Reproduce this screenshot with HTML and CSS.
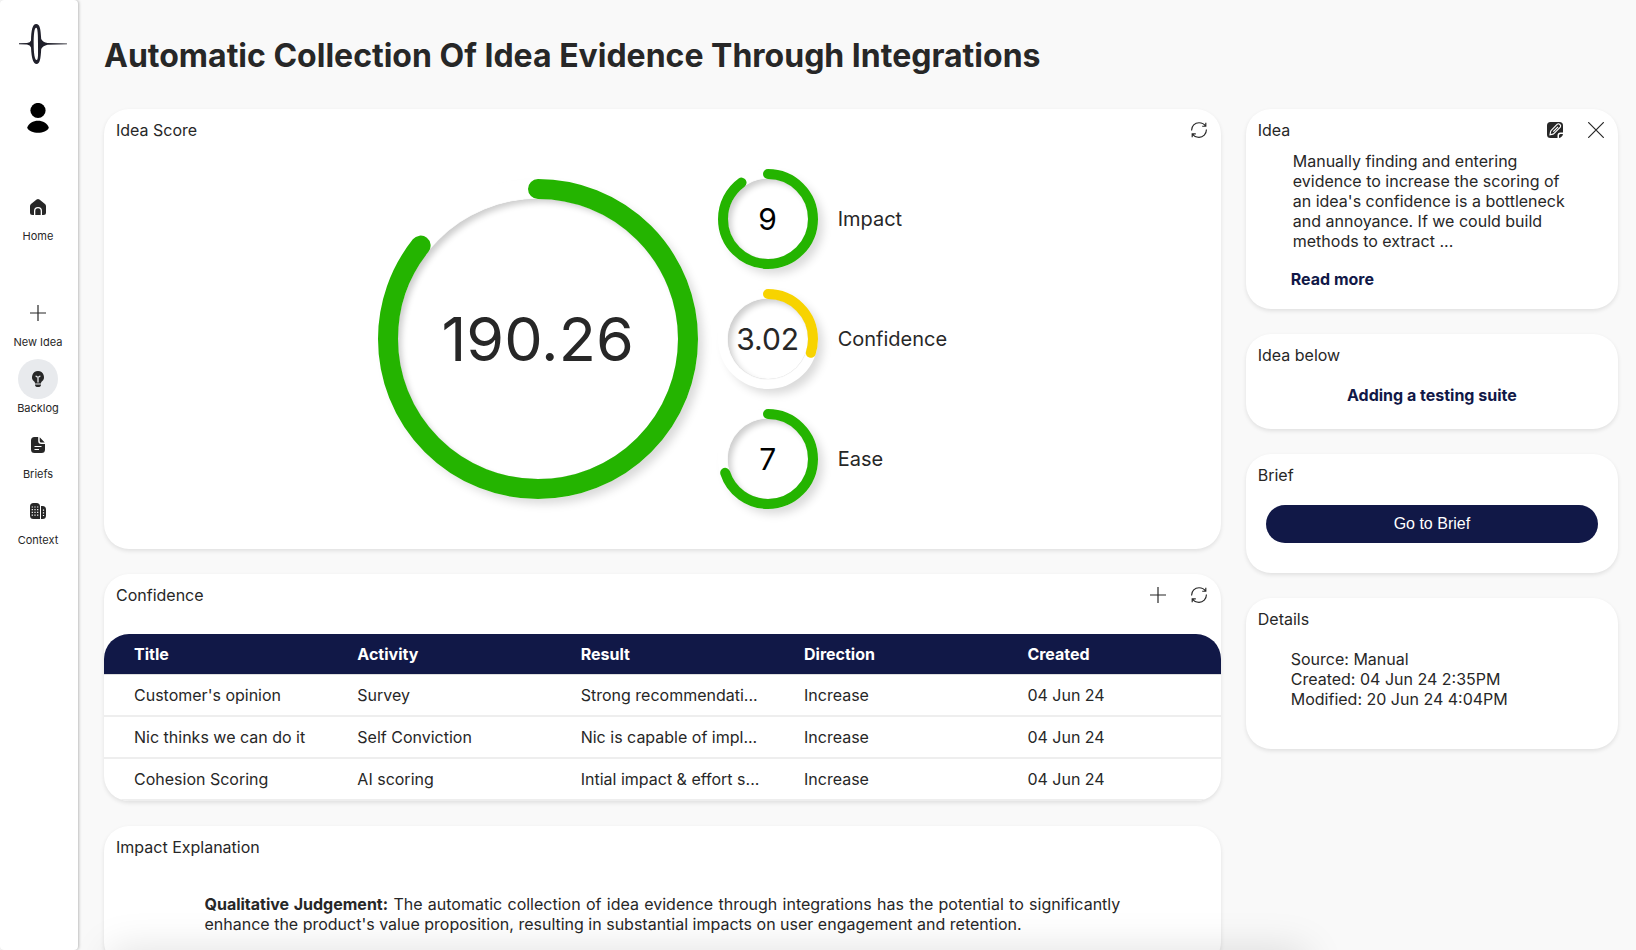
FILE: index.html
```html
<!DOCTYPE html>
<html lang="en">
<head>
<meta charset="utf-8">
<title>Automatic Collection Of Idea Evidence Through Integrations</title>
<link rel="stylesheet" href="styles.css">
</head>
<body>
<svg class="defs" aria-hidden="true">
  <symbol id="refresh" viewBox="0 0 16 16">
    <path d="M.6 8.600C.4 4 4 .7 8 .7C11 .7 13.300 2 14.500 4M15.400 7.400C15.600 12 12 15.300 8 15.300C5 15.300 2.700 14 1.500 12M14.800.8V4.200H11.200M1.200 15.200V11.800H4.800" fill="none" stroke="currentColor" stroke-width="1.150"/>
  </symbol>
  <symbol id="plus" viewBox="0 0 16 16">
    <path d="M8 0V16M0 8H16" stroke="currentColor" stroke-width="1.200"/>
  </symbol>
</svg>
<div class="app">
  <nav class="sidebar">
    <a class="logo" href="#" aria-label="Logo">
      <svg width="50" height="42" viewBox="0 0 50 42">
        <path fill="#20202b" fill-rule="evenodd" d="M1 20.300 9 20.100Q12.200 19.500 13 17.500C13.200 7 14.500 1 18.200 1S22.700 6 23.200 16Q25 19.400 29.500 20L49 20.400V21.300L29.500 21.800Q25 22.800 23.200 26C22.700 36 21.800 41 18.600 41S13.500 36 13 24.500Q12.200 22 9 21.400L1 21.200ZM18 4.800C16.200 5.500 15.700 12 15.700 21S16.700 37 18.600 37S20 30 20 21S19.800 4 18 4.800Z"/>
      </svg>
    </a>
    <a class="profile" href="#" aria-label="Profile">
      <svg width="22" height="30" viewBox="0 0 22 30"><circle cx="11" cy="7.500" r="7.600"/><path d="M.2 24.800C3 15.500 19 15.500 21.800 24.800C19 31.500 3 31.500 .2 24.800Z"/></svg>
    </a>
    <a class="item home" href="#">
      <span class="bubble"><svg width="16" height="16" viewBox="0 0 16 16"><path fill="currentColor" d="M8 0Q8.700 0 9.400.600L15 5Q16 5.900 16 7.200V13.500Q16 16 13.500 16H12V12A4 4 0 0 0 4 12V16H2.500Q0 16 0 13.500V7.200Q0 5.900 1 5L6.600.600Q7.300 0 8 0ZM8 9.300A2.700 2.700 0 0 1 10.700 12V16H5.300V12A2.700 2.700 0 0 1 8 9.300Z"/></svg></span>
      <span>Home</span>
    </a>
    <a class="item" href="#">
      <span class="bubble"><svg width="16" height="16"><use href="#plus"/></svg></span>
      <span>New Idea</span>
    </a>
    <a class="item active" href="#">
      <span class="bubble"><svg width="16" height="16" viewBox="0 0 16 16"><path fill="currentColor" d="M8 0A6 6 0 0 1 11.800 10.600Q11 11.300 11 12.400H5Q5 11.300 4.200 10.600A6 6 0 0 1 8 0ZM5 13.400H11Q11 16 8 16T5 13.400Z"/><path d="M5.700 4.800Q6.500 6.200 8 6.200T10.300 4.800M8 6.200V11.500" fill="none" stroke="#e8eaed" stroke-width="1.300"/></svg></span>
      <span>Backlog</span>
    </a>
    <a class="item" href="#">
      <span class="bubble"><svg width="16" height="16" viewBox="0 0 16 16"><path fill="currentColor" d="M4.500 0H8.200V4Q8.200 7 11.200 7H15V12.500Q15 16 11.500 16H4.500Q1 16 1 12.500V3.500Q1 0 4.500 0ZM9.700.200 14.700 5.600H11.200Q9.700 5.600 9.700 4Z"/><path d="M4.500 9.500H11.500M4.500 12.500H9" stroke="#fff" stroke-width="1.100"/></svg></span>
      <span>Briefs</span>
    </a>
    <a class="item" href="#">
      <span class="bubble"><svg width="16" height="16" viewBox="0 0 16 16"><path fill="currentColor" d="M3.500 0H6.500Q10 0 10 3.500V16H3.500Q0 16 0 12.500V3.500Q0 0 3.500 0ZM11 3H12.500Q16 3 16 6.500V12.500Q16 16 12.500 16H11Z"/><path d="M1.700 4H8.300M1.700 6.700H8.300M1.700 9.400H8.300M1.700 12.100H8.300" stroke="#fff" stroke-width="1.200" stroke-dasharray="1.200 1.500"/><path d="M13.500 6.500V13" stroke="#fff" stroke-width="1.200" stroke-dasharray="1.200 1.500"/></svg></span>
      <span>Context</span>
    </a>
  </nav>
  <main class="main">
    <h1>Automatic Collection Of Idea Evidence Through Integrations</h1>
    <div class="columns">
      <div class="column">
        <section class="card score">
          <header><h2>Idea Score</h2><button aria-label="Refresh score"><svg width="16" height="16"><use href="#refresh"/></svg></button></header>
          <div class="rings">
            <div class="ring large"><div class="dial">
              <svg viewBox="0 0 320 320"><circle class="green" cx="160" cy="160" r="150" pathLength="1000" stroke-width="20" stroke-dasharray="857 1000"/></svg>
              <span>190.26</span>
            </div></div>
            <ul class="parts">
              <li><div class="ring"><div class="dial"><svg viewBox="0 0 100 100"><circle class="green" cx="50" cy="50" r="45" pathLength="100" stroke-width="10" stroke-dasharray="90 100"/></svg><span class="black">9</span></div></div>Impact</li>
              <li><div class="ring"><div class="dial"><svg viewBox="0 0 100 100"><circle class="yellow" cx="50" cy="50" r="45" pathLength="100" stroke-width="10" stroke-dasharray="30 100"/></svg><span>3.02</span></div></div>Confidence</li>
              <li><div class="ring"><div class="dial"><svg viewBox="0 0 100 100"><circle class="green" cx="50" cy="50" r="45" pathLength="100" stroke-width="10" stroke-dasharray="70 100"/></svg><span class="black">7</span></div></div>Ease</li>
            </ul>
          </div>
        </section>
        <section class="card evidence">
          <header><h2>Confidence</h2><button aria-label="Add evidence"><svg width="16" height="16"><use href="#plus"/></svg></button><button aria-label="Refresh confidence"><svg width="16" height="16"><use href="#refresh"/></svg></button></header>
          <table>
            <thead><tr><th>Title</th><th>Activity</th><th>Result</th><th>Direction</th><th>Created</th></tr></thead>
            <tbody>
              <tr><td>Customer's opinion</td><td>Survey</td><td>Strong recommendati...</td><td>Increase</td><td>04 Jun 24</td></tr>
              <tr><td>Nic thinks we can do it</td><td>Self Conviction</td><td>Nic is capable of impl...</td><td>Increase</td><td>04 Jun 24</td></tr>
              <tr><td>Cohesion Scoring</td><td>AI scoring</td><td>Intial impact &amp; effort s...</td><td>Increase</td><td>04 Jun 24</td></tr>
            </tbody>
          </table>
        </section>
        <section class="card">
          <header><h2>Impact Explanation</h2></header>
          <p class="explanation"><strong>Qualitative Judgement:</strong> The automatic collection of idea evidence through integrations has the potential to significantly enhance the product's value proposition, resulting in substantial impacts on user engagement and retention.</p>
        </section>
      </div>
      <aside class="column">
        <section class="card">
          <header><h2>Idea</h2>
            <button aria-label="Edit idea"><svg width="16" height="16" viewBox="0 0 16 16"><path fill="currentColor" d="M3.500 0H12.500Q16 0 16 3.500V10.500H13.500Q10.500 10.500 10.500 13.500V16H3.500Q0 16 0 12.500V3.500Q0 0 3.500 0ZM12 16V13.500Q12 12 13.500 12H16Q15.500 15.200 12 16Z"/><path d="M3 12.800 3.600 9.600Q3.800 8.800 4.500 8.100L10.300 2.200Q11.500 1.200 12.900 2.500T13.300 5.200L7.400 11.200Q6.800 11.900 6 12.100ZM6.300 9.700 11 4.900" fill="none" stroke="#fff" stroke-width="1.150"/></svg></button>
            <button aria-label="Close"><svg width="16" height="16" viewBox="0 0 16 16"><path d="M.2.2 15.800 15.800M15.800.2.2 15.800" stroke="currentColor" stroke-width="1.200"/></svg></button>
          </header>
          <p class="summary">Manually finding and entering evidence to increase the scoring of an idea's confidence is a bottleneck and annoyance. If we could build methods to extract ...</p>
          <a class="link more" href="#">Read more</a>
        </section>
        <section class="card">
          <header><h2>Idea below</h2></header>
          <a class="link below" href="#">Adding a testing suite</a>
        </section>
        <section class="card">
          <header><h2>Brief</h2></header>
          <button class="primary">Go to Brief</button>
        </section>
        <section class="card">
          <header><h2>Details</h2></header>
          <p class="details">Source: Manual<br>Created: 04 Jun 24 2:35PM<br>Modified: 20 Jun 24 4:04PM</p>
        </section>
      </aside>
    </div>
  </main>
</div>
<div class="dock" aria-hidden="true"></div>
</body>
</html>
```
FILE: styles.css
```css
* { box-sizing: border-box; }
body {
  margin: 0;
  height: 100vh;
  overflow: hidden;
  background: #f9f9f9;
  color: #272727;
  font: 16px/20px Inter, "Liberation Sans", sans-serif;
}
h1, h2, p, ul { margin: 0; padding: 0; }
a { color: inherit; text-decoration: none; }
button { border: 0; background: none; color: inherit; padding: 0; }
svg { display: block; }
.defs { position: absolute; width: 0; height: 0; }
.app { display: flex; height: 100vh; }
.sidebar {
  flex: 0 0 78px;
  display: flex;
  flex-direction: column;
  align-items: center;
  padding: 23px 2px 0 0;
  background: #fff;
  border-radius: 4px;
  box-shadow: 1px 0 3px rgba(0, 0, 0, .25);
}
.logo { padding-left: 10px; }
.profile { margin: 38px 0 54px; color: #000; }
.item {
  display: flex;
  flex-direction: column;
  align-items: center;
  height: 66px;
  font-size: 11px;
  line-height: 18px;
}
.home { margin-bottom: 40px; }
.bubble {
  display: grid;
  place-items: center;
  width: 40px;
  height: 40px;
  border-radius: 50%;
}
.active .bubble { background: #e8eaed; }
.main { flex: 1; min-width: 0; padding: 36px 18px 0 26px; }
h1 { font-size: 32px; line-height: 40px; font-weight: 700; }
.columns {
  display: grid;
  grid-template-columns: 3fr 1fr;
  gap: 25px;
  align-items: start;
  margin-top: 33px;
}
.column { display: grid; gap: 25px; min-width: 0; }
.card {
  min-width: 0;
  padding-bottom: 33px;
  border-radius: 25px;
  background: #fff;
  box-shadow: 0 2px 4px rgba(0, 0, 0, .1);
}
.card header {
  display: flex;
  align-items: center;
  gap: 25px;
  height: 40px;
  padding: 2px 14px 0 12px;
}
h2 { flex: 1; font-size: 16px; line-height: 20px; font-weight: 400; }
.score { padding-bottom: 40px; }
.rings {
  display: flex;
  justify-content: center;
  align-items: center;
  gap: 20px;
  padding-top: 20px;
}
.ring {
  position: relative;
  width: 100px;
  height: 100px;
  padding: 10px;
  border-radius: 50%;
  box-shadow: 6px 6px 10px -1px rgba(0, 0, 0, .15), -6px -6px 10px -1px rgba(255, 255, 255, .7);
}
.dial {
  display: grid;
  place-items: center;
  height: 100%;
  border-radius: 50%;
  font-size: 30px;
  line-height: 36px;
  box-shadow: inset 4px 4px 6px -1px rgba(0, 0, 0, .2), inset -4px -4px 6px -1px rgba(255, 255, 255, .7), 0 0 1px rgba(0, 0, 0, .3);
}
.ring svg { position: absolute; inset: 0; width: 100%; height: 100%; transform: rotate(-90deg); }
.ring circle { fill: none; stroke-linecap: round; }
.green { stroke: #24b400; }
.yellow { stroke: #f7d300; }
.black { color: #000; }
.large { width: 320px; height: 320px; padding: 20px; }
.large .dial { font-size: 61px; line-height: 72px; }
.parts { display: grid; gap: 20px; list-style: none; font-size: 20px; line-height: 24px; }
.parts li { display: flex; align-items: center; gap: 20px; }
.evidence { padding-bottom: 0; overflow: hidden; }
.evidence table {
  width: 100%;
  margin-top: 20px;
  border-collapse: separate;
  border-spacing: 0;
  table-layout: fixed;
  border-radius: 25px 25px 0 0;
  overflow: hidden;
}
th, td { padding: 0 20px 0 30px; text-align: left; white-space: nowrap; }
th { height: 41px; border-bottom: 1px solid #ddd; background: #111847; background-clip: padding-box; color: #fff; font-weight: 700; }
td { height: 42px; border-bottom: 2px solid #eee; }
.explanation { margin: 28px 9% 0; text-align: justify; }
.summary { padding: 2px 47px 0; }
.link { display: block; color: #111847; font-weight: 700; }
.more { margin: 18px 45px -13px; }
.below { margin: 11px 20px -9px; text-align: center; }
.primary {
  display: block;
  width: calc(100% - 40px);
  height: 38px;
  margin: 11px 20px -3px;
  border-radius: 19px;
  background: #111847;
  color: #fff;
  font: 16px/20px "Liberation Sans", Arial, sans-serif;
}
.details { padding: 11px 45px 7px; }
.dock {
  position: fixed;
  top: 100%;
  left: 110px;
  right: 330px;
  height: 40px;
  box-shadow: 0 0 40px rgba(0, 0, 0, .13);
}
```
